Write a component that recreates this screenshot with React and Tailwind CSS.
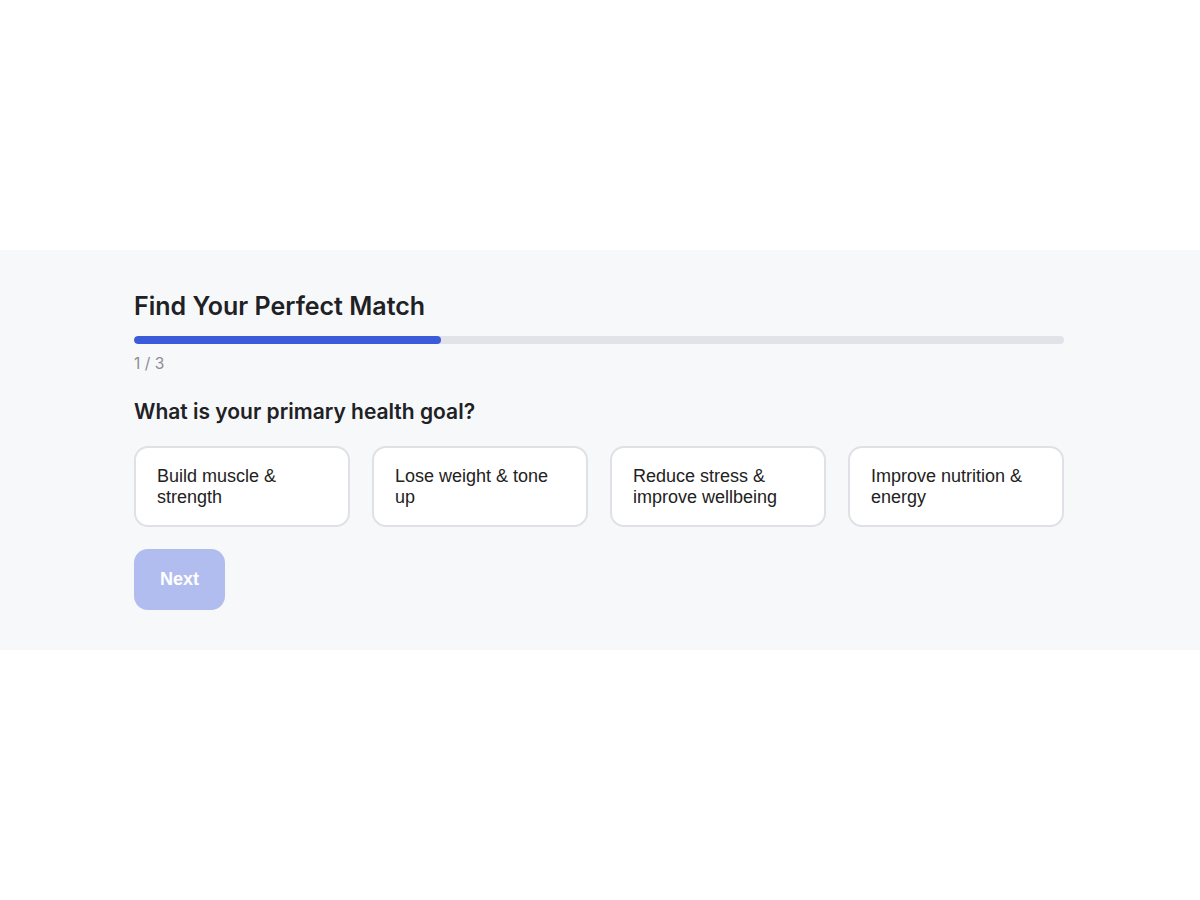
import React, { useState } from "react";

const goals = [
  "Build muscle & strength",
  "Lose weight & tone up",
  "Reduce stress & improve wellbeing",
  "Improve nutrition & energy",
];

export default function App() {
  const [selected, setSelected] = useState(null);
  const step = 1;
  const total = 3;

  return (
    <div className="min-h-screen flex items-center bg-white font-['Inter',sans-serif]">
      <section className="w-full bg-[#f7f8fa] pt-10 pb-10">
        <div className="w-[930px] ml-[134px]">
          {/* Header */}
          <h1 className="text-[25px] leading-8 font-semibold text-[#202124]">
            Find Your Perfect Match
          </h1>

          {/* Progress */}
          <div className="mt-[14px] h-2 w-full rounded-full bg-[#e1e3e9] overflow-hidden">
            <div
              className="h-full rounded-full bg-[#3b5bdb]"
              style={{ width: `${Math.floor((step / total) * 100)}%` }}
            />
          </div>
          <p className="mt-2.5 text-[15.5px] leading-5 text-[#8a8d93]">
            {step} / {total}
          </p>

          {/* Question */}
          <h2 className="mt-6 text-[21px] leading-7 font-semibold text-[#202124]">
            What is your primary health goal?
          </h2>

          <div className="mt-5 grid grid-cols-4 gap-[22px]">
            {goals.map((goal, idx) => (
              <button
                key={idx}
                onClick={() => setSelected(idx)}
                className={`text-left bg-white border-2 rounded-[14px] pl-[21px] pr-5 pt-[18px] pb-[17px] font-['Liberation_Sans',Arial,sans-serif] text-[18px] leading-[21px] text-[#222] ${
                  selected === idx ? "border-[#3b5bdb]" : "border-[#dfe1e6]"
                }`}
              >
                {goal}
              </button>
            ))}
          </div>

          <button
            disabled={selected === null}
            className="mt-[22px] rounded-[14px] bg-[#3b5bdb] disabled:bg-[#b1bdef] px-[26px] py-5 font-['Liberation_Sans',Arial,sans-serif] font-bold text-[18px] leading-[21px] text-white"
          >
            Next
          </button>
        </div>
      </section>
    </div>
  );
}
